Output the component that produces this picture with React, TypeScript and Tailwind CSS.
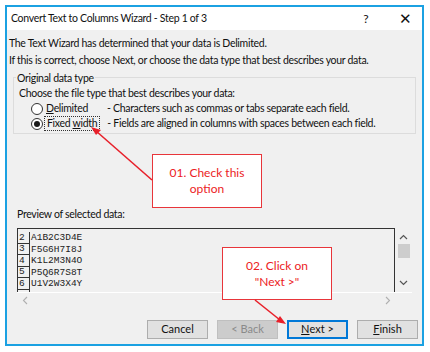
import React from "react";

const ROWS = [
  ["2", "A1B2C3D4E"],
  ["3", "F5G6H7I8J"],
  ["4", "K1L2M3N4O"],
  ["5", "P5Q6R7S8T"],
  ["6", "U1V2W3X4Y"],
];

const ui = { fontFamily: "Lato, 'Noto Sans', sans-serif" };
const mono = { fontFamily: "'Liberation Mono', 'DejaVu Sans Mono', monospace" };

function Radio({ checked }: { checked?: boolean }) {
  return (
    <span className="flex h-[12px] w-[12px] items-center justify-center rounded-full border border-[#333] bg-white">
      {checked && <span className="h-[6px] w-[6px] rounded-full bg-[#1a1a1a]" />}
    </span>
  );
}

function Btn({ children, primary, disabled }: { children: React.ReactNode; primary?: boolean; disabled?: boolean }) {
  return (
    <div
      className={
        "flex h-[19px] w-[61px] items-center justify-center text-[11px] " +
        (primary
          ? "border-2 border-[#0078d7] bg-[#e1e1e1] text-[#111]"
          : disabled
          ? "border border-[#bfbfbf] bg-[#cccccc] text-[#8a8a8a]"
          : "border border-[#adadad] bg-[#e1e1e1] text-[#111]")
      }
    >
      {children}
    </div>
  );
}

export default function App() {
  return (
    <div className="relative h-[352px] w-[430px] overflow-hidden bg-white pl-[5px] pt-[5px]" style={ui}>
      <div className="flex h-[341px] w-[419px] flex-col border-2 border-[#1ba1e2] bg-[#f0f0f0]">
        {/* title bar */}
        <div className="flex h-[23px] shrink-0 items-center bg-white pl-[4px] text-[10.5px] tracking-[-0.3px] text-[#111]">
          <span className="whitespace-nowrap">Convert Text to Columns Wizard - Step 1 of 3</span>
          <span className="ml-auto w-[10px] text-[12px]">?</span>
          <span className="ml-[26px] mr-[10px] text-[15px] font-light">✕</span>
        </div>

        {/* body */}
        <div className="flex flex-1 flex-col whitespace-nowrap pl-[2px] pt-[4.5px] text-[10.5px] tracking-[-0.3px] text-[#111]">
          <p className="h-[17px] leading-[17px]">The Text Wizard has determined that your data is Delimited.</p>
          <p className="h-[17px] leading-[17px]">If this is correct, choose Next, or choose the data type that best describes your data.</p>

          <div className="ml-[4px] mt-[8.5px] flex w-[403px] flex-col border border-[#dcdcdc] pb-[2px] pl-[5px]">
            <span className="-ml-[3px] -mt-[8px] h-[16px] w-fit bg-[#f0f0f0] px-[1px] leading-[16px]">Original data type</span>
            <p className="h-[15px] leading-[15px]">Choose the file type that best describes your data:</p>
            <div className="flex h-[15px] items-center">
              <span className="ml-[12px]"><Radio /></span>
              <span className="ml-[3px] w-[61px]"><u>D</u>elimited</span>
              <span>- Characters such as commas or tabs separate each field.</span>
            </div>
            <div className="flex h-[15px] items-center">
              <span className="ml-[12px]"><Radio checked /></span>
              <span className="ml-[1px] mr-[7px] border border-dotted border-[#333] px-[2px] leading-[13px]">Fixed <u>w</u>idth</span>
              <span>- Fields are aligned in columns with spaces between each field.</span>
            </div>
          </div>

          <p className="ml-[8px] mt-[72px] h-[16px] leading-[16px]">Preview of selected data:</p>

          {/* preview */}
          <div className="ml-[8px] mt-[6px] w-[395px] tracking-normal">
            <div className="flex h-[64px]">
              <div className="flex-1 overflow-hidden border-l border-r border-t border-[#333] bg-[#f0f0f0] pt-[3px]" style={mono}>
                {ROWS.map(([n, v]) => (
                  <div key={n} className="flex h-[11.5px] items-center text-[9.5px] leading-[11px] text-[#222]">
                    <span className="w-[12px] border-b border-r border-[#333] pl-[1px]">{n}</span>
                    <span className="pl-[1px]">{v}</span>
                  </div>
                ))}
                <div className="h-[5px] w-[12px] border-r border-[#333]" />
              </div>
              <div className="flex w-[17px] flex-col items-center">
                <svg width="9" height="6" viewBox="0 0 9 6" className="mt-[6px]"><path d="M1 5 L4.5 1.5 L8 5" stroke="#555" strokeWidth="1.2" fill="none" /></svg>
                <div className="mt-[4px] h-[14px] w-[12px] bg-[#cdcdcd]" />
                <svg width="9" height="6" viewBox="0 0 9 6" className="mb-[6px] mt-auto"><path d="M1 1 L4.5 4.5 L8 1" stroke="#555" strokeWidth="1.2" fill="none" /></svg>
              </div>
            </div>
            <div className="flex h-[15px] items-center justify-between border-t border-white px-[5px] pr-[21px]">
              <svg width="6" height="9" viewBox="0 0 6 9"><path d="M5 1 L1.5 4.5 L5 8" stroke="#b0b0b0" strokeWidth="1.1" fill="none" /></svg>
              <svg width="6" height="9" viewBox="0 0 6 9"><path d="M1 1 L4.5 4.5 L1 8" stroke="#b0b0b0" strokeWidth="1.1" fill="none" /></svg>
            </div>
          </div>

          {/* buttons */}
          <div className="mt-[13px] flex gap-[9px] pl-[138px] tracking-normal">
            <Btn>Cancel</Btn>
            <Btn disabled>&lt; Back</Btn>
            <Btn primary><u>N</u>ext &gt;</Btn>
            <Btn><u>F</u>inish</Btn>
          </div>
        </div>
      </div>

      {/* annotations */}
      <div className="absolute left-[152px] top-[154px] flex h-[54px] w-[110px] flex-col items-center justify-center border border-[#e8353a] bg-white text-[12px] leading-[16px] text-[#ec1c24]">
        <span>01. Check this</span>
        <span>option</span>
      </div>
      <div className="absolute left-[222px] top-[247px] flex h-[53px] w-[110px] flex-col items-center justify-center border border-[#e8353a] bg-white text-[12px] leading-[16px] text-[#ec1c24]">
        <span>02. Click on</span>
        <span>"Next &gt;"</span>
      </div>
      <svg className="pointer-events-none absolute left-0 top-0" width="430" height="352">
        <line x1="152" y1="180" x2="96" y2="131" stroke="#e8202a" strokeWidth="1.6" />
        <polygon points="91,127 101,130 96,135" fill="#e8202a" />
        <line x1="255" y1="300" x2="280" y2="320" stroke="#e8202a" strokeWidth="1.6" />
        <polygon points="286,324 276,322 280,316" fill="#e8202a" />
      </svg>
    </div>
  );
}
